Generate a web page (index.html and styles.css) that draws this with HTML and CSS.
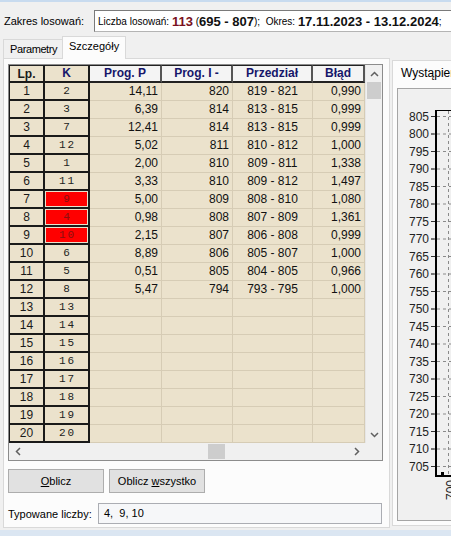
FILE: index.html
```html
<!DOCTYPE html>
<html lang="pl">
<head>
<meta charset="utf-8">
<link rel="stylesheet" href="styles.css">
</head>
<body>
<div class="topstrip"></div>
<div class="range-row">
  <span class="range-label">Zakres losowań:</span>
  <div class="range-box"><span>Liczba losowań:&nbsp;</span><b class="hi">113</b><span>&nbsp;(</span><b>695 - 807</b><span>);&nbsp;&nbsp;Okres:&nbsp;</span><b>17.11.2023 - 13.12.2024</b><span>;</span></div>
</div>
<div class="main">
  <div class="tabs">
    <div class="tabstrip">
      <div class="tab tab-1">Parametry</div>
      <div class="tab tab-2 active">Szczegóły</div>
    </div>
    <div class="panel">
      <div class="grid">
        <div class="cells">
          <div class="h fx lp hd-lp">Lp.</div><div class="h fx">K</div><div class="h">Prog. P</div><div class="h">Prog. I -</div><div class="h">Przedział</div><div class="h">Błąd</div>

          <div class="fx lp">1</div><div class="fx k">2</div><div class="c r">14,11</div><div class="c r">820</div><div class="c m">819 - 821</div><div class="c r">0,990</div>
          <div class="fx lp">2</div><div class="fx k">3</div><div class="c r">6,39</div><div class="c r">814</div><div class="c m">813 - 815</div><div class="c r">0,999</div>
          <div class="fx lp">3</div><div class="fx k">7</div><div class="c r">12,41</div><div class="c r">814</div><div class="c m">813 - 815</div><div class="c r">0,999</div>
          <div class="fx lp">4</div><div class="fx k">12</div><div class="c r">5,02</div><div class="c r">811</div><div class="c m">810 - 812</div><div class="c r">1,000</div>
          <div class="fx lp">5</div><div class="fx k">1</div><div class="c r">2,00</div><div class="c r">810</div><div class="c m">809 - 811</div><div class="c r">1,338</div>
          <div class="fx lp">6</div><div class="fx k">11</div><div class="c r">3,33</div><div class="c r">810</div><div class="c m">809 - 812</div><div class="c r">1,497</div>
          <div class="fx lp">7</div><div class="fx k sel"><span class="redbox">9</span></div><div class="c r">5,00</div><div class="c r">809</div><div class="c m">808 - 810</div><div class="c r">1,080</div>
          <div class="fx lp">8</div><div class="fx k sel"><span class="redbox">4</span></div><div class="c r">0,98</div><div class="c r">808</div><div class="c m">807 - 809</div><div class="c r">1,361</div>
          <div class="fx lp">9</div><div class="fx k sel"><span class="redbox">10</span></div><div class="c r">2,15</div><div class="c r">807</div><div class="c m">806 - 808</div><div class="c r">0,999</div>
          <div class="fx lp">10</div><div class="fx k">6</div><div class="c r">8,89</div><div class="c r">806</div><div class="c m">805 - 807</div><div class="c r">1,000</div>
          <div class="fx lp">11</div><div class="fx k">5</div><div class="c r">0,51</div><div class="c r">805</div><div class="c m">804 - 805</div><div class="c r">0,966</div>
          <div class="fx lp">12</div><div class="fx k">8</div><div class="c r">5,47</div><div class="c r">794</div><div class="c m">793 - 795</div><div class="c r">1,000</div>
          <div class="fx lp">13</div><div class="fx k">13</div><div class="c"></div><div class="c"></div><div class="c"></div><div class="c"></div>
          <div class="fx lp">14</div><div class="fx k">14</div><div class="c"></div><div class="c"></div><div class="c"></div><div class="c"></div>
          <div class="fx lp">15</div><div class="fx k">15</div><div class="c"></div><div class="c"></div><div class="c"></div><div class="c"></div>
          <div class="fx lp">16</div><div class="fx k">16</div><div class="c"></div><div class="c"></div><div class="c"></div><div class="c"></div>
          <div class="fx lp">17</div><div class="fx k">17</div><div class="c"></div><div class="c"></div><div class="c"></div><div class="c"></div>
          <div class="fx lp">18</div><div class="fx k">18</div><div class="c"></div><div class="c"></div><div class="c"></div><div class="c"></div>
          <div class="fx lp">19</div><div class="fx k">19</div><div class="c"></div><div class="c"></div><div class="c"></div><div class="c"></div>
          <div class="fx lp">20</div><div class="fx k">20</div><div class="c"></div><div class="c"></div><div class="c"></div><div class="c"></div>
        </div>
        <div class="vscroll">
          <div class="arrow"><svg width="9" height="6" viewBox="0 0 9 6"><path d="M1 5 L4.5 1.5 L8 5" fill="none" stroke="#606060" stroke-width="1.5"/></svg></div>
          <div class="vthumb"></div>
          <div class="spacer"></div>
          <div class="arrow"><svg width="9" height="6" viewBox="0 0 9 6"><path d="M1 1 L4.5 4.5 L8 1" fill="none" stroke="#606060" stroke-width="1.5"/></svg></div>
        </div>
        <div class="hscroll">
          <div class="arrow"><svg width="6" height="9" viewBox="0 0 6 9"><path d="M5 1 L1.5 4.5 L5 8" fill="none" stroke="#606060" stroke-width="1.5"/></svg></div>
          <div class="hgap"></div>
          <div class="hthumb"></div>
          <div class="spacer"></div>
          <div class="arrow"><svg width="6" height="9" viewBox="0 0 6 9"><path d="M1 1 L4.5 4.5 L1 8" fill="none" stroke="#606060" stroke-width="1.5"/></svg></div>
        </div>
        <div class="corner"></div>
      </div>
      <div class="btns">
        <div class="btn"><span><u>O</u>blicz</span></div>
        <div class="btn"><span>Oblicz <u>w</u>szystko</span></div>
      </div>
      <div class="typed">
        <span class="typed-label">Typowane liczby:</span>
        <div class="typed-box">4,  9, 10</div>
      </div>
    </div>
  </div>
  <div class="right">
    <div class="right-title">Wystąpienia</div>
    <div class="chart">
      <svg class="chart-svg" width="296" height="431" viewBox="0 0 296 431">
        <g stroke="#8a8a8a" stroke-width="1" stroke-dasharray="3 3" fill="none">
          <line x1="33" y1="27.5" x2="296" y2="27.5"/>
          <line x1="33" y1="45" x2="296" y2="45"/>
          <line x1="33" y1="62.5" x2="296" y2="62.5"/>
          <line x1="33" y1="80" x2="296" y2="80"/>
          <line x1="33" y1="97.5" x2="296" y2="97.5"/>
          <line x1="33" y1="115" x2="296" y2="115"/>
          <line x1="33" y1="132.5" x2="296" y2="132.5"/>
          <line x1="33" y1="150" x2="296" y2="150"/>
          <line x1="33" y1="167.5" x2="296" y2="167.5"/>
          <line x1="33" y1="185" x2="296" y2="185"/>
          <line x1="33" y1="202.5" x2="296" y2="202.5"/>
          <line x1="33" y1="220" x2="296" y2="220"/>
          <line x1="33" y1="237.5" x2="296" y2="237.5"/>
          <line x1="33" y1="255" x2="296" y2="255"/>
          <line x1="33" y1="272.5" x2="296" y2="272.5"/>
          <line x1="33" y1="290" x2="296" y2="290"/>
          <line x1="33" y1="307.5" x2="296" y2="307.5"/>
          <line x1="33" y1="325" x2="296" y2="325"/>
          <line x1="33" y1="342.5" x2="296" y2="342.5"/>
          <line x1="33" y1="360" x2="296" y2="360"/>
          <line x1="33" y1="377.5" x2="296" y2="377.5"/>
          <line x1="50.5" y1="22" x2="50.5" y2="386"/>
        </g>
        <g stroke="#333" stroke-width="1">
          <line x1="33" y1="27.5" x2="37" y2="27.5"/>
          <line x1="33" y1="45" x2="37" y2="45"/>
          <line x1="33" y1="62.5" x2="37" y2="62.5"/>
          <line x1="33" y1="80" x2="37" y2="80"/>
          <line x1="33" y1="97.5" x2="37" y2="97.5"/>
          <line x1="33" y1="115" x2="37" y2="115"/>
          <line x1="33" y1="132.5" x2="37" y2="132.5"/>
          <line x1="33" y1="150" x2="37" y2="150"/>
          <line x1="33" y1="167.5" x2="37" y2="167.5"/>
          <line x1="33" y1="185" x2="37" y2="185"/>
          <line x1="33" y1="202.5" x2="37" y2="202.5"/>
          <line x1="33" y1="220" x2="37" y2="220"/>
          <line x1="33" y1="237.5" x2="37" y2="237.5"/>
          <line x1="33" y1="255" x2="37" y2="255"/>
          <line x1="33" y1="272.5" x2="37" y2="272.5"/>
          <line x1="33" y1="290" x2="37" y2="290"/>
          <line x1="33" y1="307.5" x2="37" y2="307.5"/>
          <line x1="33" y1="325" x2="37" y2="325"/>
          <line x1="33" y1="342.5" x2="37" y2="342.5"/>
          <line x1="33" y1="360" x2="37" y2="360"/>
          <line x1="33" y1="377.5" x2="37" y2="377.5"/>
        </g>
        <g stroke="#000" fill="none">
          <line x1="38" y1="21.5" x2="296" y2="21.5" stroke-width="1"/>
          <line x1="38" y1="21" x2="38" y2="388" stroke-width="2"/>
          <line x1="37" y1="387" x2="296" y2="387" stroke-width="2"/>
        </g>
        <rect x="43" y="383" width="3" height="3" fill="#000"/>
        <g font-family="Liberation Sans, Arial, sans-serif" font-size="12" fill="#222" text-anchor="end">
          <text x="31" y="31.5">805</text>
          <text x="31" y="49">800</text>
          <text x="31" y="66.5">795</text>
          <text x="31" y="84">790</text>
          <text x="31" y="101.5">785</text>
          <text x="31" y="119">780</text>
          <text x="31" y="136.5">775</text>
          <text x="31" y="154">770</text>
          <text x="31" y="171.5">765</text>
          <text x="31" y="189">760</text>
          <text x="31" y="206.5">755</text>
          <text x="31" y="224">750</text>
          <text x="31" y="241.5">745</text>
          <text x="31" y="259">740</text>
          <text x="31" y="276.5">735</text>
          <text x="31" y="294">730</text>
          <text x="31" y="311.5">725</text>
          <text x="31" y="329">720</text>
          <text x="31" y="346.5">715</text>
          <text x="31" y="364">710</text>
          <text x="31" y="381.5">705</text>
          <text transform="translate(57 391) rotate(-90)">700</text>
        </g>
      </svg>
    </div>
  </div>
</div>
<div class="bottomstrip"></div>
</body>
</html>
```

FILE: styles.css
```css
* { box-sizing: border-box; }
html, body { margin: 0; padding: 0; }
body {
  width: 451px;
  height: 536px;
  overflow: hidden;
  background: #f0f0f0;
  font-family: "Liberation Sans", Arial, sans-serif;
  font-size: 11px;
  color: #000;
}
.topstrip { height: 2px; background: #c8dbef; }

.range-row {
  display: flex;
  align-items: center;
  height: 31px;
  padding: 7px 0 0 4px;
}
.range-label { width: 90px; flex: none; }
.range-box {
  flex: none;
  width: 400px;
  height: 22px;
  border: 1px solid #b4b4b4;
  border-top-color: #7a7a7a;
  border-left-color: #7a7a7a;
  background: #fff;
  padding-left: 3px;
  display: flex;
  align-items: center;
  white-space: nowrap;
  font-size: 10px;
}
.range-box b { font-size: 13px; color: #111; }
.range-box b.hi { color: #7a1020; }

.main {
  display: flex;
  align-items: flex-start;
  width: 800px;
  margin-top: 3px;
}
.tabs { width: 387px; margin-left: 3px; flex: none; }
.tabstrip { height: 22px; display: flex; align-items: flex-end; }
.tab {
  height: 19px;
  border: 1px solid #d9d9d9;
  border-bottom: none;
  background: #f0f0f0;
  line-height: 18px;
  white-space: nowrap;
  letter-spacing: -0.4px;
}
.tab-1 { width: 60px; padding-left: 6px; margin-right: -1px; }
.tab-2 { width: 64px; padding-left: 6px; }
.tab.active {
  height: 23px;
  margin-bottom: -1px;
  background: #fcfcfc;
  position: relative;
  z-index: 1;
  line-height: 19px;
  letter-spacing: 0;
}

.panel {
  height: 470px;
  border: 1px solid #d9d9d9;
  background: #fcfcfc;
  padding: 5px 4px 0 4px;
}

.grid {
  display: grid;
  grid-template-columns: 356px 17px;
  grid-template-rows: 378px 17px;
  width: 375px;
  border: 1px solid #8c8c8c;
  background: #f0f0f0;
}
.cells {
  display: grid;
  grid-template-columns: 36px 45px 72px 71px 80px 52px;
  grid-auto-rows: 18px;
  overflow: hidden;
  background: #ebe2cc;
}
.cells > div {
  overflow: hidden;
  white-space: nowrap;
}
.h {
  background: #f4f4f4;
  border-top: 1px solid #222;
  border-right: 2px solid #555;
  border-bottom: 2px solid #222;
  font-weight: bold;
  font-size: 12px;
  color: #16166a;
  text-align: center;
  line-height: 14px;
}
.h.fx { border-right-color: #1a1a1a; }
.hd-lp { color: #111; }
.fx {
  border-right: 2px solid #1a1a1a;
  border-bottom: 2px solid #1a1a1a;
  text-align: center;
  background: #ebe2cc;
}
.lp {
  border-left: 1px solid #1a1a1a;
  font-size: 12px;
  line-height: 16px;
  color: #1a1a1a;
}
.k {
  font-family: "Liberation Mono", "Courier New", monospace;
  font-size: 11px;
  letter-spacing: 2px;
  padding-left: 2px;
  line-height: 16px;
  color: #222;
}
.k.sel { padding: 1px 0 0 1px; }
.redbox {
  display: block;
  height: 14px;
  margin-right: 1px;
  background: #ff0000;
  color: #8a1010;
  line-height: 14px;
  padding-left: 2px;
}
.c {
  border-right: 1px solid #d6ccb5;
  border-bottom: 1px solid #d6ccb5;
  font-size: 12px;
  line-height: 17px;
  color: #111;
  padding: 0 3px;
}
.r { text-align: right; }
.m { text-align: center; }

.vscroll {
  display: flex;
  flex-direction: column;
  background: #f0f0f0;
  border-left: 1px solid #e6e6e6;
}
.arrow {
  width: 17px;
  height: 17px;
  display: flex;
  align-items: center;
  justify-content: center;
  flex: none;
}
.vthumb { height: 17px; margin: 0 1px; background: #cdcdcd; flex: none; }
.spacer { flex: 1; }
.hscroll { display: flex; background: #f0f0f0; }
.hgap { width: 182px; flex: none; }
.hthumb { width: 17px; margin: 1px 0; background: #cdcdcd; flex: none; }
.corner { background: #f0f0f0; }

.btns { display: flex; gap: 5px; margin-top: 8px; }
.btn {
  width: 96px;
  height: 24px;
  border: 1px solid #adadad;
  background: #e1e1e1;
  display: flex;
  align-items: center;
  justify-content: center;
}
.typed { display: flex; align-items: center; margin-top: 10px; }
.typed-label { width: 90px; flex: none; }
.typed-box {
  width: 284px;
  height: 21px;
  border: 1px solid #abadb3;
  background: #f6f7f9;
  padding-left: 5px;
  line-height: 19px;
  white-space: pre;
}

.right {
  flex: none;
  width: 300px;
  height: 466px;
  margin-left: 2px;
  margin-top: 24px;
  border: 1px solid #d9d9d9;
  border-right: none;
  background: #fcfcfc;
  padding: 5px 0 0 4px;
}
.right-title { height: 14px; line-height: 14px; padding-left: 4px; margin-bottom: 8px; font-size: 12px; white-space: nowrap; }
.chart {
  width: 296px;
  height: 433px;
  border: 1px solid #a5a5a5;
  background: #f0f0f0;
}
.chart-svg { display: block; }

.bottomstrip { height: 8px; margin-top: 2px; background: #dbe6f2; }
```
